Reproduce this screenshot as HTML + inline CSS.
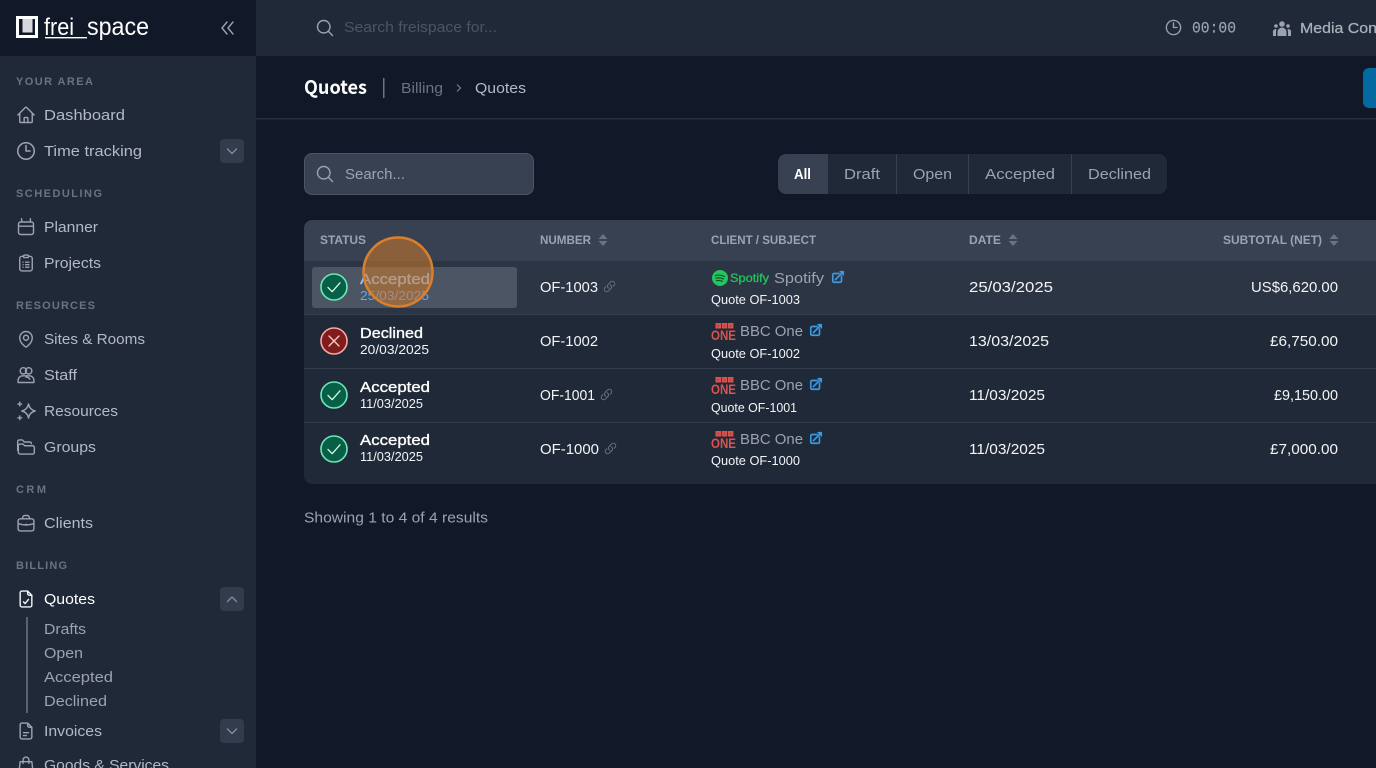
<!DOCTYPE html>
<html lang="en"><head><meta charset="utf-8"><title>Quotes - frei_space</title>
<style>
html,body{margin:0;padding:0;width:1376px;height:768px;overflow:hidden;background:#111827}
svg{display:block;position:absolute;left:0;top:0}
text{font-family:"Liberation Sans",sans-serif;white-space:pre}
.n{font-size:15px;fill:#b3bac4}
.s{font-size:11px;font-weight:700;fill:#6b7280}
.h{font-size:12px;font-weight:700;fill:#9ca3af}
.w{font-size:15px;fill:#f3f4f6}
.st{font-size:15px;fill:#fff;stroke:#fff;stroke-width:.35px}
.d{font-size:12.5px;fill:#f3f4f6}
.q{font-size:12.5px;fill:#f3f4f6}
.c{font-size:15px;fill:#9ca3af}
.ic{fill:none;stroke:#9ca3af;stroke-width:1.7;stroke-linecap:round;stroke-linejoin:round}
.ext{fill:none;stroke:#3b9ae1;stroke-width:2.8;stroke-linecap:round;stroke-linejoin:round}
.lnk{fill:none;stroke:#6b7280;stroke-width:1.8;stroke-linecap:round;stroke-linejoin:round}
</style></head><body>
<svg width="1376" height="768" viewBox="0 0 1376 768" xmlns="http://www.w3.org/2000/svg">
<defs>
<symbol id="mag" viewBox="0 0 24 24"><path d="M21 21l-5.197-5.197m0 0A7.5 7.5 0 105.196 5.196a7.5 7.5 0 0010.607 10.607z"/></symbol>
<symbol id="clock" viewBox="0 0 24 24"><path d="M12 6v6h4.5m4.5 0a9 9 0 11-18 0 9 9 0 0118 0z"/></symbol>
<symbol id="ext" viewBox="0 0 24 24"><path d="M13.5 6H5.25A2.25 2.25 0 003 8.25v10.5A2.25 2.25 0 005.25 21h10.5A2.25 2.25 0 0018 18.75V10.5m-10.5 6L21 3m0 0h-5.25M21 3v5.25"/></symbol>
<symbol id="lnk" viewBox="0 0 24 24"><path d="M13.19 8.688a4.5 4.5 0 011.242 7.244l-4.5 4.5a4.5 4.5 0 01-6.364-6.364l1.757-1.757m13.35-.622l1.757-1.757a4.5 4.5 0 00-6.364-6.364l-4.5 4.5a4.5 4.5 0 001.242 7.244"/></symbol>
<symbol id="sort" viewBox="0 0 10 12"><path d="M5 0L9.5 5H.5zM5 12L.5 7h9z" fill="#6b7280"/></symbol>
<symbol id="ok" viewBox="0 0 28 28"><circle cx="14" cy="14" r="13" fill="#065f46" stroke="#6ee7b7" stroke-width="1.6"/><path d="M8 14.5l4.2 4.2L20 9.8" fill="none" stroke="#d1fae5" stroke-width="1.3" stroke-linecap="round" stroke-linejoin="round"/></symbol>
<symbol id="no" viewBox="0 0 28 28"><circle cx="14" cy="14" r="13" fill="#7f1d1d" stroke="#fca5a5" stroke-width="1.6"/><path d="M9 9l10 10M19 9L9 19" fill="none" stroke="#fecaca" stroke-width="1.3" stroke-linecap="round"/></symbol>
<symbol id="bbc" viewBox="0 0 26 18"><g fill="#d9534f"><rect x="5.5" y="0" width="5.5" height="5.5"/><rect x="11.7" y="0" width="5.5" height="5.5"/><rect x="17.9" y="0" width="5.5" height="5.5"/></g><g fill="#a84a4a"><rect x="7.2" y="1.7" width="2" height="2"/><rect x="13.4" y="1.7" width="2" height="2"/><rect x="19.6" y="1.7" width="2" height="2"/></g></symbol>
<clipPath id="tbl"><rect x="304" y="220" width="1100" height="264" rx="8"/></clipPath>
</defs>

<!-- backgrounds -->
<rect width="1376" height="768" fill="#111827"/>
<rect x="256" y="0" width="1120" height="56" fill="#1f2937"/>
<rect x="0" y="56" width="256" height="712" fill="#1f2937"/>
<rect x="0" y="0" width="256" height="56" fill="#111827"/>
<rect x="256" y="118" width="1120" height="1.5" fill="#252e3c"/>

<!-- logo -->
<rect x="16" y="16" width="22" height="22" fill="#fff"/>
<rect x="19" y="19" width="16" height="16" fill="#111827"/>
<rect x="22.5" y="19" width="10" height="13.500" fill="#d6d8dc"/>
<text x="44" y="35" font-size="24" fill="#fff" textLength="30" lengthAdjust="spacingAndGlyphs">frei</text>
<text x="87" y="35" font-size="25" fill="#fff" textLength="62" lengthAdjust="spacingAndGlyphs">space</text>
<rect x="45" y="37" width="42" height="1.4" fill="#fff"/>
<path d="M227 22l-5 6 5 6M233 22l-5 6 5 6" fill="none" stroke="#9ca3af" stroke-width="1.4" stroke-linecap="round" stroke-linejoin="round"/>

<!-- sidebar labels -->
<text class="s" x="16" y="85" textLength="77" lengthAdjust="spacing">YOUR AREA</text>
<text class="s" x="16" y="197" textLength="86" lengthAdjust="spacing">SCHEDULING</text>
<text class="s" x="16" y="309" textLength="79" lengthAdjust="spacing">RESOURCES</text>
<text class="s" x="16" y="493" textLength="30" lengthAdjust="spacing">CRM</text>
<text class="s" x="16" y="569" textLength="51" lengthAdjust="spacing">BILLING</text>

<text class="n" x="44" y="120" textLength="81" lengthAdjust="spacingAndGlyphs">Dashboard</text>
<text class="n" x="44" y="156" textLength="98" lengthAdjust="spacingAndGlyphs">Time tracking</text>
<text class="n" x="44" y="232" textLength="54" lengthAdjust="spacingAndGlyphs">Planner</text>
<text class="n" x="44" y="268" textLength="57" lengthAdjust="spacingAndGlyphs">Projects</text>
<text class="n" x="44" y="344" textLength="101" lengthAdjust="spacingAndGlyphs">Sites &amp; Rooms</text>
<text class="n" x="44" y="380" textLength="33" lengthAdjust="spacingAndGlyphs">Staff</text>
<text class="n" x="44" y="416" textLength="74" lengthAdjust="spacingAndGlyphs">Resources</text>
<text class="n" x="44" y="452" textLength="52" lengthAdjust="spacingAndGlyphs">Groups</text>
<text class="n" x="44" y="528" textLength="49" lengthAdjust="spacingAndGlyphs">Clients</text>
<text class="n" style="fill:#fff" x="44" y="604" textLength="51" lengthAdjust="spacingAndGlyphs">Quotes</text>
<text class="n" style="fill:#9ca3af" x="44" y="634" textLength="42" lengthAdjust="spacingAndGlyphs">Drafts</text>
<text class="n" style="fill:#9ca3af" x="44" y="658" textLength="39" lengthAdjust="spacingAndGlyphs">Open</text>
<text class="n" style="fill:#9ca3af" x="44" y="682" textLength="69" lengthAdjust="spacingAndGlyphs">Accepted</text>
<text class="n" style="fill:#9ca3af" x="44" y="706" textLength="63" lengthAdjust="spacingAndGlyphs">Declined</text>
<text class="n" x="44" y="736" textLength="58" lengthAdjust="spacingAndGlyphs">Invoices</text>
<text class="n" x="44" y="770" textLength="125" lengthAdjust="spacingAndGlyphs">Goods &amp; Services</text>
<rect x="26" y="617" width="2" height="96" fill="#596272"/>

<!-- sidebar icons -->
<g class="ic">
<svg x="16" y="105" width="20" height="20" viewBox="0 0 24 24"><path d="M2.25 12l8.954-8.955c.44-.439 1.152-.439 1.591 0L21.75 12M4.5 9.75v10.125c0 .621.504 1.125 1.125 1.125H9.750v-4.875c0-.621.504-1.125 1.125-1.125h2.250c.621 0 1.125.504 1.125 1.125V21h4.125c.621 0 1.125-.504 1.125-1.125V9.750M8.250 21h8.250"/></svg>
<use href="#clock" x="15" y="140" width="22" height="22"/>
<svg x="16" y="217" width="20" height="20" viewBox="0 0 24 24"><path d="M6.750 2v3.500M17.250 2v3.500M3 8.500A2.500 2.500 0 015.500 6h13A2.500 2.500 0 0121 8.500v10a2.500 2.500 0 01-2.500 2.500h-13A2.500 2.500 0 013 18.500zM3 11h18"/></svg>
<svg x="16" y="253" width="20" height="20" viewBox="0 0 24 24"><path d="M9 4H7a2.500 2.500 0 00-2.500 2.500v12.500A2.500 2.500 0 007 21.500h10a2.500 2.500 0 002.500-2.500V6.500A2.500 2.500 0 0017 4h-2M9 4a1.500 1.500 0 011.500-1.500h3A1.500 1.500 0 0115 4v.500a1 1 0 01-1 1h-4a1 1 0 01-1-1zM8.500 11h.01M11.500 11h4M8.500 14h.01M11.500 14h4M8.500 17h.01M11.500 17h4"/></svg>
<svg x="16" y="329" width="20" height="20" viewBox="0 0 24 24"><path d="M15 10.500a3 3 0 11-6 0 3 3 0 016 0z"/><path d="M19.500 10.500c0 7.142-7.500 11.250-7.500 11.250S4.500 17.642 4.500 10.500a7.500 7.500 0 1115 0z"/></svg>
<svg x="16" y="365" width="20" height="20" viewBox="0 0 24 24"><circle cx="8.800" cy="7" r="3.800"/><circle cx="15.200" cy="7" r="3.800"/><path d="M2.500 21v-2.500a5.500 5.500 0 015.500-5.500h8a5.500 5.500 0 015.500 5.500V21zM12 14.500a5 5 0 014.500 2.500"/></svg>
<svg x="16" y="401" width="20" height="20" viewBox="0 0 24 24"><path d="M15 3.500c.8 4.500 3.500 7.500 8 8.500-4.500 1-7.200 4-8 8.500-.8-4.500-3.500-7.500-8-8.500 4.500-1 7.200-4 8-8.500z"/><path d="M4.500 1.500v4.400M2.300 3.700h4.400M4.500 18v4.400M2.300 20.200h4.400"/></svg>
<svg x="16" y="437" width="20" height="20" viewBox="0 0 24 24"><path d="M2 16V5.500A2 2 0 014 3.500h3.500l2.500 2.500h6.500a2 2 0 012 2"/><path d="M5 20.500a2.200 2.200 0 01-2.200-2.200V10.500A2 2 0 015 8.500h3.500l2 2H20a2 2 0 012 2v6a2 2 0 01-2 2z"/></svg>
<svg x="16" y="513" width="20" height="20" viewBox="0 0 24 24"><path d="M8 7V5.500A2.500 2.500 0 0110.500 3h3A2.500 2.500 0 0116 5.500V7M5 7h14a2.500 2.500 0 012.500 2.500v9.500a2.500 2.500 0 01-2.500 2.500H5A2.500 2.500 0 012.500 19V9.500A2.500 2.500 0 015 7zM2.500 12.500c5.500 2.500 13.500 2.500 19 0M12 13.500h.01"/></svg>
<svg x="16" y="589" width="20" height="20" viewBox="0 0 24 24" style="stroke:#f3f4f6"><path d="M14 2.500H7a2 2 0 00-2 2v15a2 2 0 002 2h10a2 2 0 002-2V7.500zM14 2.500v3a2 2 0 002 2h3M9 15.500l2 2 4-5"/></svg>
<svg x="16" y="721" width="20" height="20" viewBox="0 0 24 24"><path d="M14 2.500H7a2 2 0 00-2 2v15a2 2 0 002 2h10a2 2 0 002-2V7.500zM14 2.500v3a2 2 0 002 2h3M9 14h6M9 17.500h3.500"/></svg>
<svg x="16" y="755" width="20" height="20" viewBox="0 0 24 24"><path d="M5 8h14l1.500 13h-17zM8.500 10V6a3.500 3.500 0 017 0v4"/></svg>
</g>

<!-- chevron buttons -->
<g>
<rect x="220" y="139" width="24" height="24" rx="4" fill="#323c4c"/>
<rect x="220" y="587" width="24" height="24" rx="4" fill="#323c4c"/>
<rect x="220" y="719" width="24" height="24" rx="4" fill="#323c4c"/>
<g fill="none" stroke="#848c99" stroke-width="1.300" stroke-linecap="round" stroke-linejoin="round">
<path d="M227.500 149l4.500 4.500 4.500-4.500"/><path d="M227.500 601.500l4.500-4.500 4.500 4.500"/><path d="M227.500 729l4.500 4.500 4.500-4.500"/>
</g>
</g>

<!-- top bar -->
<g class="ic"><use href="#mag" x="315" y="18" width="20" height="20"/>
<use href="#clock" x="1164" y="18" width="19" height="19"/></g>
<text x="344" y="32" font-size="15" fill="#4b5563" textLength="153" lengthAdjust="spacingAndGlyphs">Search freispace for...</text>
<text x="1192" y="32.500" font-size="16" fill="#9ca3af" stroke="#9ca3af" stroke-width=".2" style="font-family:'Liberation Mono',monospace" textLength="44" lengthAdjust="spacingAndGlyphs">00:00</text>
<g fill="#9ca3af">
<circle cx="1282" cy="24" r="2.800"/><circle cx="1276" cy="26" r="1.800"/><circle cx="1288" cy="26" r="1.800"/>
<path d="M1277.500 36v-4a4.500 4.500 0 019 0v4zM1273 36v-3a3 3 0 013-4l.500 .500a6 6 0 00-.500 2.500v4zM1291 36v-3a3 3 0 00-3-4l-.500 .500a6 6 0 01.500 2.500v4z"/>
</g>
<text x="1300" y="33" font-size="15" fill="#aab1bb" stroke="#aab1bb" stroke-width=".25" textLength="77" lengthAdjust="spacingAndGlyphs">Media Con</text>

<!-- breadcrumb -->
<text x="304" y="94" font-size="19" font-weight="700" fill="#fff" style="font-family:'Noto Sans CJK JP','Liberation Sans',sans-serif" textLength="63" lengthAdjust="spacingAndGlyphs">Quotes</text>
<rect x="383" y="78" width="1.500" height="20" fill="#6b7280"/>
<text x="401" y="93" font-size="15" fill="#6b7280" textLength="42" lengthAdjust="spacingAndGlyphs">Billing</text>
<path d="M457 84.500l3.500 3.500-3.500 3.500" fill="none" stroke="#6b7280" stroke-width="1.300"/>
<text x="475" y="93" font-size="15" fill="#b3bac4" textLength="51" lengthAdjust="spacingAndGlyphs">Quotes</text>
<rect x="1363" y="68" width="30" height="40" rx="6" fill="#0369a1"/>

<!-- search box -->
<rect x="304.500" y="153.500" width="229" height="41" rx="7.500" fill="#374151" stroke="#4b5563"/>
<g class="ic"><use href="#mag" x="315" y="164" width="20" height="20"/></g>
<text x="345" y="179" font-size="15" fill="#9ca3af" textLength="60" lengthAdjust="spacingAndGlyphs">Search...</text>

<!-- filters -->
<rect x="778" y="154" width="389" height="40" rx="8" fill="#1f2937"/>
<path d="M828 154h-42a8 8 0 00-8 8v24a8 8 0 008 8h42z" fill="#374151"/>
<g fill="#374151"><rect x="896" y="154" width="1" height="40"/><rect x="968" y="154" width="1" height="40"/><rect x="1071" y="154" width="1" height="40"/></g>
<text x="794" y="179" font-size="15" font-weight="700" fill="#fff" textLength="17" lengthAdjust="spacingAndGlyphs">All</text>
<text class="c" x="844" y="179" textLength="36" lengthAdjust="spacingAndGlyphs">Draft</text>
<text class="c" x="913" y="179" textLength="39" lengthAdjust="spacingAndGlyphs">Open</text>
<text class="c" x="985" y="179" textLength="70" lengthAdjust="spacingAndGlyphs">Accepted</text>
<text class="c" x="1088" y="179" textLength="63" lengthAdjust="spacingAndGlyphs">Declined</text>

<!-- table -->
<g clip-path="url(#tbl)">
<rect x="304" y="220" width="1100" height="264" fill="#1f2937"/>
<rect x="304" y="220" width="1100" height="41" fill="#374151"/>
<rect x="304" y="261" width="1100" height="54" fill="#2b3543"/>
<rect x="304" y="314" width="1100" height="1" fill="#333d4b"/>
<rect x="304" y="368" width="1100" height="1" fill="#333d4b"/>
<rect x="304" y="422" width="1100" height="1" fill="#333d4b"/>
</g>

<text class="h" x="320" y="244" textLength="46" lengthAdjust="spacingAndGlyphs">STATUS</text>
<text class="h" x="540" y="244" textLength="51" lengthAdjust="spacingAndGlyphs">NUMBER</text>
<text class="h" x="711" y="244" textLength="105" lengthAdjust="spacingAndGlyphs">CLIENT / SUBJECT</text>
<text class="h" x="969" y="244" textLength="32" lengthAdjust="spacingAndGlyphs">DATE</text>
<text class="h" x="1223" y="244" textLength="99" lengthAdjust="spacingAndGlyphs">SUBTOTAL (NET)</text>
<use href="#sort" x="598" y="234" width="10" height="12"/>
<use href="#sort" x="1008" y="234" width="10" height="12"/>
<use href="#sort" x="1329" y="234" width="10" height="12"/>

<!-- row highlight -->
<rect x="312" y="267" width="205" height="41" rx="3" fill="#4b5563"/>

<!-- status -->
<use href="#ok" x="320" y="273" width="28" height="28"/>
<use href="#no" x="320" y="327" width="28" height="28"/>
<use href="#ok" x="320" y="381" width="28" height="28"/>
<use href="#ok" x="320" y="435" width="28" height="28"/>
<text class="st" x="360" y="284" style="fill:#93c5fd;stroke:#93c5fd" textLength="70" lengthAdjust="spacingAndGlyphs">Accepted</text>
<text class="d" x="360" y="300" style="fill:#60a5fa" textLength="69" lengthAdjust="spacingAndGlyphs">25/03/2025</text>
<text class="st" x="360" y="338" textLength="63" lengthAdjust="spacingAndGlyphs">Declined</text>
<text class="d" x="360" y="354" textLength="69" lengthAdjust="spacingAndGlyphs">20/03/2025</text>
<text class="st" x="360" y="392" textLength="70" lengthAdjust="spacingAndGlyphs">Accepted</text>
<text class="d" x="360" y="408" textLength="63" lengthAdjust="spacingAndGlyphs">11/03/2025</text>
<text class="st" x="360" y="445" textLength="70" lengthAdjust="spacingAndGlyphs">Accepted</text>
<text class="d" x="360" y="461" textLength="63" lengthAdjust="spacingAndGlyphs">11/03/2025</text>

<!-- numbers -->
<text class="w" x="540" y="292" textLength="58" lengthAdjust="spacingAndGlyphs">OF-1003</text>
<text class="w" x="540" y="346" textLength="58" lengthAdjust="spacingAndGlyphs">OF-1002</text>
<text class="w" x="540" y="400" textLength="55" lengthAdjust="spacingAndGlyphs">OF-1001</text>
<text class="w" x="540" y="454" textLength="59" lengthAdjust="spacingAndGlyphs">OF-1000</text>
<g class="lnk"><use href="#lnk" x="603" y="280" width="13" height="13"/><use href="#lnk" x="600" y="388" width="13" height="13"/><use href="#lnk" x="604" y="442" width="13" height="13"/></g>

<!-- clients -->
<circle cx="720" cy="278" r="8" fill="#22c55e"/>
<path d="M715.500 275.500c3-.8 6-.5 9 .9M716 278.200c2.500-.6 5-.4 7.500.8M716.500 280.700c2-.5 4-.3 6 .6" fill="none" stroke="#14532d" stroke-width="1.200" stroke-linecap="round"/>
<text x="730" y="282" font-size="12" fill="#22c55e" stroke="#22c55e" stroke-width=".3" textLength="39" lengthAdjust="spacingAndGlyphs">Spotify</text>
<text class="c" x="774" y="283" textLength="50" lengthAdjust="spacingAndGlyphs">Spotify</text>
<text class="q" x="711" y="304" textLength="89" lengthAdjust="spacingAndGlyphs">Quote OF-1003</text>

<use href="#bbc" x="710" y="323" width="26" height="18"/>
<text x="711" y="340" font-size="13.500" font-weight="700" fill="#d9534f" textLength="25" lengthAdjust="spacingAndGlyphs">ONE</text>
<text class="c" x="740" y="336" textLength="63" lengthAdjust="spacingAndGlyphs">BBC One</text>
<text class="q" x="711" y="358" textLength="89" lengthAdjust="spacingAndGlyphs">Quote OF-1002</text>

<use href="#bbc" x="710" y="377" width="26" height="18"/>
<text x="711" y="394" font-size="13.500" font-weight="700" fill="#d9534f" textLength="25" lengthAdjust="spacingAndGlyphs">ONE</text>
<text class="c" x="740" y="390" textLength="63" lengthAdjust="spacingAndGlyphs">BBC One</text>
<text class="q" x="711" y="412" textLength="86" lengthAdjust="spacingAndGlyphs">Quote OF-1001</text>

<use href="#bbc" x="710" y="431" width="26" height="18"/>
<text x="711" y="448" font-size="13.500" font-weight="700" fill="#d9534f" textLength="25" lengthAdjust="spacingAndGlyphs">ONE</text>
<text class="c" x="740" y="444" textLength="63" lengthAdjust="spacingAndGlyphs">BBC One</text>
<text class="q" x="711" y="465" textLength="89" lengthAdjust="spacingAndGlyphs">Quote OF-1000</text>

<g class="ext"><use href="#ext" x="831" y="270" width="14" height="14"/><use href="#ext" x="809" y="323" width="14" height="14"/><use href="#ext" x="809" y="377" width="14" height="14"/><use href="#ext" x="809" y="431" width="14" height="14"/></g>

<!-- dates -->
<text class="w" x="969" y="292" textLength="84" lengthAdjust="spacingAndGlyphs">25/03/2025</text>
<text class="w" x="969" y="346" textLength="80" lengthAdjust="spacingAndGlyphs">13/03/2025</text>
<text class="w" x="969" y="400" textLength="76" lengthAdjust="spacingAndGlyphs">11/03/2025</text>
<text class="w" x="969" y="454" textLength="76" lengthAdjust="spacingAndGlyphs">11/03/2025</text>

<!-- amounts -->
<text class="w" x="1251" y="292" textLength="87" lengthAdjust="spacingAndGlyphs">US$6,620.00</text>
<text class="w" x="1270" y="346" textLength="68" lengthAdjust="spacingAndGlyphs">£6,750.00</text>
<text class="w" x="1274" y="400" textLength="64" lengthAdjust="spacingAndGlyphs">£9,150.00</text>
<text class="w" x="1270" y="454" textLength="68" lengthAdjust="spacingAndGlyphs">£7,000.00</text>

<text x="304" y="522.500" font-size="15" fill="#9ca3af" textLength="184" lengthAdjust="spacingAndGlyphs">Showing 1 to 4 of 4 results</text>

<!-- click indicator -->
<circle cx="398" cy="272" r="34.500" fill="#d07a2c" fill-opacity=".55" stroke="#d9802e" stroke-width="2.500"/>
</svg>
</body></html>
